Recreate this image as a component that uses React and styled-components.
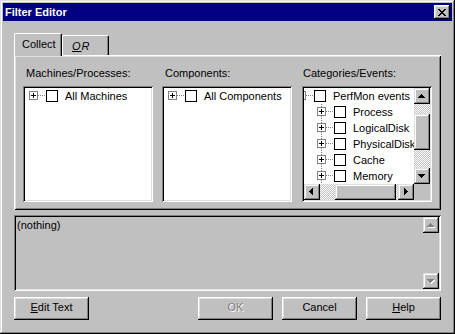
import React from 'react';
import styled, { createGlobalStyle, css } from 'styled-components';

const GlobalStyle = createGlobalStyle`
  html, body { margin: 0; padding: 0; background: #c0c0c0; }
  body { font-family: "Liberation Sans", Arial, sans-serif; font-size: 11px; }
  *, *::before, *::after { box-sizing: border-box; }
`;

const raised = css`
  box-shadow: inset -1px -1px #000, inset 1px 1px #fff, inset -2px -2px #808080, inset 2px 2px #dfdfdf;
`;
const raisedSmall = css`
  box-shadow: inset -1px -1px #000, inset 1px 1px #dfdfdf, inset -2px -2px #808080, inset 2px 2px #fff;
`;
const sunken = css`
  box-shadow: inset 1px 1px #808080, inset -1px -1px #fff, inset 2px 2px #000, inset -2px -2px #dfdfdf;
`;

const Window = styled.div`
  width: 455px;
  height: 334px;
  padding: 3px;
  background: #c0c0c0;
  color: #000;
  font-family: "Liberation Sans", Arial, sans-serif;
  font-size: 11px;
  display: flex;
  flex-direction: column;
  box-shadow: inset -1px -1px #000, inset 1px 1px #dfdfdf, inset -2px -2px #808080, inset 2px 2px #fff;
`;

const TitleBar = styled.div`
  height: 18px;
  flex: none;
  background: #000080;
  display: flex;
  align-items: center;
  justify-content: space-between;
  padding: 0 2px 0 2px;
`;

const TitleText = styled.span`
  color: #fff;
  font-weight: bold;
  line-height: 18px;
`;

const CloseButton = styled.div`
  width: 16px;
  height: 14px;
  background: #c0c0c0;
  ${raised};
  padding: 4px 0 0 4px;
  display: flex;
  align-items: flex-start;
`;

const Body = styled.div`
  flex: 1;
  display: flex;
  flex-direction: column;
  padding: 12px 11px 0 11px;
`;

const TabStrip = styled.div`
  display: flex;
  align-items: flex-end;
  height: 22px;
  flex: none;
`;

const Tab = styled.div`
  position: relative;
  background: #c0c0c0;
  border-top: 1px solid #fff;
  border-left: 1px solid #fff;
  border-right: 1px solid #000;
  border-top-left-radius: 2px;
  border-top-right-radius: 2px;
  box-shadow: inset -1px 0 #808080;
  line-height: 13px;
  padding-top: 4px;
  white-space: nowrap;
  ${(p) =>
    p.$active
      ? css`
          width: 48px;
          height: 23px;
          margin-bottom: -1px;
          z-index: 1;
          padding-left: 7px;
        `
      : css`
          width: 47px;
          height: 20px;
          padding-left: 9px;
        `}
`;

const OrLabel = styled.span`
  font-style: italic;
  letter-spacing: 1px;
`;

const Panel = styled.div`
  height: 155px;
  flex: none;
  background: #c0c0c0;
  box-shadow: inset 1px 1px #fff, inset -1px -1px #000, inset 2px 2px #dfdfdf, inset -2px -2px #808080;
  padding: 12px 9px 0 9px;
  display: grid;
  grid-template-columns: 130px 131px 130px;
  column-gap: 9px;
  align-content: start;
`;

const Column = styled.div`
  display: flex;
  flex-direction: column;
`;

const FieldLabel = styled.div`
  line-height: 13px;
  height: 13px;
  margin-bottom: 6px;
  padding-left: ${(p) => p.$inset ?? 3}px;
  white-space: nowrap;
`;

const ListBox = styled.div`
  width: 130px;
  height: 116px;
  background: #fff;
  padding: 2px;
  overflow: hidden;
  ${sunken};
  ${(p) =>
    p.$scroll &&
    css`
      display: grid;
      grid-template-columns: minmax(0, 1fr) 16px;
      grid-template-rows: minmax(0, 1fr) 16px;
    `}
`;

const Viewport = styled.div`
  overflow: hidden;
  min-width: 0;
`;

const Tree = styled.div`
  margin-left: ${(p) => -(p.$offset || 0)}px;
`;

const TreeRow = styled.div`
  display: flex;
  align-items: center;
  height: 16px;
  padding-left: ${(p) => (p.$level || 0) * 20}px;
  white-space: nowrap;
`;

const ExpSvg = styled.svg`
  flex: none;
  display: block;
`;

const Check = styled.span`
  flex: none;
  width: 12px;
  height: 12px;
  margin-left: 1px;
  border: 1px solid #000;
  background: #fff;
`;

const ItemText = styled.span`
  margin-left: 7px;
  line-height: 16px;
`;

const VScroll = styled.div`
  display: flex;
  flex-direction: column;
  width: 16px;
`;

const HScroll = styled.div`
  display: flex;
  height: 16px;
  min-width: 0;
`;

const ScrollBtn = styled.div`
  flex: none;
  width: 16px;
  height: 16px;
  background: #c0c0c0;
  ${raisedSmall};
`;

const Track = styled.div`
  flex: 1;
  display: flex;
  flex-direction: ${(p) => (p.$horizontal ? 'row' : 'column')};
  ${(p) =>
    p.$dither
      ? css`
          background-color: #fff;
          background-image: conic-gradient(#c0c0c0 25%, transparent 0 50%, #c0c0c0 0 75%, transparent 0);
          background-size: 2px 2px;
        `
      : css`
          background: #c0c0c0;
        `}
`;

const Thumb = styled.div`
  flex: none;
  background: #c0c0c0;
  ${raisedSmall};
  ${(p) =>
    p.$horizontal
      ? css`
          width: ${p.$size}px;
          margin-left: ${p.$at}px;
        `
      : css`
          height: ${p.$size}px;
          margin-top: ${p.$at}px;
        `}
`;

const Corner = styled.div`
  background: #c0c0c0;
`;

const TextBox = styled.div`
  height: 76px;
  flex: none;
  margin-top: 5px;
  background: #c0c0c0;
  padding: 2px;
  display: grid;
  grid-template-columns: minmax(0, 1fr) 16px;
  ${sunken};
`;

const TextContent = styled.div`
  padding: 2px 1px;
  line-height: 13px;
`;

const ButtonRow = styled.div`
  margin-top: 6px;
  display: flex;
  justify-content: space-between;
`;

const ButtonGroup = styled.div`
  display: flex;
  gap: 9px;
`;

const Button = styled.div`
  width: 75px;
  height: 23px;
  background: #c0c0c0;
  ${raised};
  text-align: center;
  line-height: 21px;
  padding-bottom: 2px;
  color: ${(p) => (p.$disabled ? '#808080' : '#000')};
  text-shadow: ${(p) => (p.$disabled ? '1px 1px 0 #fff' : 'none')};
`;

const Expander = ({ sign = 'plus', vline = false }) => (
  <ExpSvg width="20" height="16" viewBox="0 0 20 16" shapeRendering="crispEdges">
    {vline && <line x1="8.5" y1="0" x2="8.5" y2="16" stroke="#808080" strokeDasharray="1 1" />}
    <line x1="13" y1="7.5" x2="20" y2="7.5" stroke="#808080" strokeDasharray="1 1" />
    <rect x="4.5" y="3.5" width="8" height="8" fill="#fff" stroke="#808080" />
    <line x1="6" y1="7.5" x2="11" y2="7.5" stroke="#000" />
    {sign === 'plus' && <line x1="8.5" y1="5" x2="8.5" y2="10" stroke="#000" />}
  </ExpSvg>
);

const arrowRects = {
  up: [[7, 6, 1, 1], [6, 7, 3, 1], [5, 8, 5, 1], [4, 9, 7, 1]],
  down: [[4, 6, 7, 1], [5, 7, 5, 1], [6, 8, 3, 1], [7, 9, 1, 1]],
  left: [[5, 7, 1, 1], [6, 6, 1, 3], [7, 5, 1, 5], [8, 4, 1, 7]],
  right: [[6, 4, 1, 7], [7, 5, 1, 5], [8, 6, 1, 3], [9, 7, 1, 1]],
};

const Arrow = ({ dir, disabled }) => (
  <ScrollBtn>
    <ExpSvg width="16" height="16" viewBox="0 0 16 16" shapeRendering="crispEdges">
      {disabled &&
        arrowRects[dir].map(([x, y, w, h], i) => (
          <rect key={'s' + i} x={x + 1} y={y + 1} width={w} height={h} fill="#fff" />
        ))}
      {arrowRects[dir].map(([x, y, w, h], i) => (
        <rect key={i} x={x} y={y} width={w} height={h} fill={disabled ? '#808080' : '#000'} />
      ))}
    </ExpSvg>
  </ScrollBtn>
);

const closeRects = [
  [0, 0, 2], [6, 0, 2],
  [1, 1, 2], [5, 1, 2],
  [2, 2, 4],
  [3, 3, 2],
  [2, 4, 4],
  [1, 5, 2], [5, 5, 2],
  [0, 6, 2], [6, 6, 2],
];

const CloseGlyph = () => (
  <ExpSvg width="8" height="7" viewBox="0 0 8 7" shapeRendering="crispEdges">
    {closeRects.map(([x, y, w], i) => (
      <rect key={i} x={x} y={y} width={w} height="1" fill="#000" />
    ))}
  </ExpSvg>
);

const categories = ['Process', 'LogicalDisk', 'PhysicalDisk', 'Cache', 'Memory', 'Memory2'];

export default function App() {
  return (
    <>
      <GlobalStyle />
      <Window>
        <TitleBar>
          <TitleText>Filter Editor</TitleText>
          <CloseButton>
            <CloseGlyph />
          </CloseButton>
        </TitleBar>
        <Body>
          <TabStrip>
            <Tab $active>Collect</Tab>
            <Tab>
              <OrLabel>
                <u>O</u>R
              </OrLabel>
            </Tab>
          </TabStrip>
          <Panel>
            <Column>
              <FieldLabel $inset={3}>Machines/Processes:</FieldLabel>
              <ListBox>
                <TreeRow>
                  <Expander />
                  <Check />
                  <ItemText>All Machines</ItemText>
                </TreeRow>
              </ListBox>
            </Column>
            <Column>
              <FieldLabel $inset={3}>Components:</FieldLabel>
              <ListBox>
                <TreeRow>
                  <Expander />
                  <Check />
                  <ItemText>All Components</ItemText>
                </TreeRow>
              </ListBox>
            </Column>
            <Column>
              <FieldLabel $inset={1}>Categories/Events:</FieldLabel>
              <ListBox $scroll>
                <Viewport>
                  <Tree $offset={11}>
                    <TreeRow>
                      <Expander sign="minus" />
                      <Check />
                      <ItemText>PerfMon events</ItemText>
                    </TreeRow>
                    {categories.slice(0, 5).map((c) => (
                      <TreeRow key={c} $level={1}>
                        <Expander vline />
                        <Check />
                        <ItemText>{c}</ItemText>
                      </TreeRow>
                    ))}
                  </Tree>
                </Viewport>
                <VScroll>
                  <Arrow dir="up" />
                  <Track $dither>
                    <Thumb $size={36} $at={10} />
                  </Track>
                  <Arrow dir="down" />
                </VScroll>
                <HScroll>
                  <Arrow dir="left" />
                  <Track $dither $horizontal>
                    <Thumb $horizontal $size={61} $at={15} />
                  </Track>
                  <Arrow dir="right" />
                </HScroll>
                <Corner />
              </ListBox>
            </Column>
          </Panel>
          <TextBox>
            <TextContent>(nothing)</TextContent>
            <VScroll>
              <Arrow dir="up" disabled />
              <Track />
              <Arrow dir="down" disabled />
            </VScroll>
          </TextBox>
          <ButtonRow>
            <Button>
              <u>E</u>dit Text
            </Button>
            <ButtonGroup>
              <Button $disabled>OK</Button>
              <Button>Cancel</Button>
              <Button>
                <u>H</u>elp
              </Button>
            </ButtonGroup>
          </ButtonRow>
        </Body>
      </Window>
    </>
  );
}
